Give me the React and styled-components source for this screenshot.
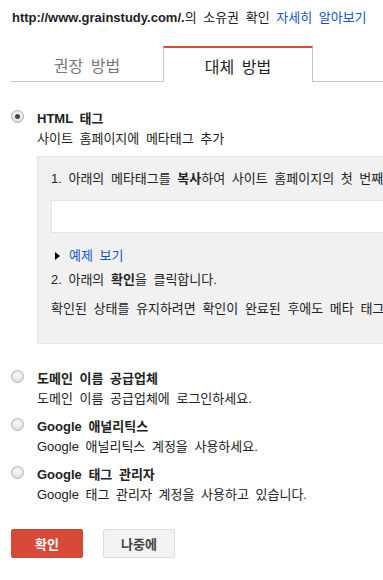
import React, { useState } from 'react';
import styled, { createGlobalStyle } from 'styled-components';

const GlobalStyle = createGlobalStyle`
  body {
    margin: 0;
    background: #fff;
    font-family: "Liberation Sans", Arial, "Noto Sans CJK KR", sans-serif;
    font-size: 13px;
    word-spacing: 3px;
    color: #222;
  }
`;

const Page = styled.div`
  width: 383px;
  height: 580px;
  overflow: hidden;
  padding: 8px 0 0 11px;
  box-sizing: border-box;
`;

const Header = styled.div`
  line-height: 20px;
  padding-left: 1px;
  white-space: nowrap;
`;

const Url = styled.b`
  font-weight: bold;
  color: #222;
`;

const Link = styled.a`
  color: #1155cc;
  text-decoration: none;
  cursor: pointer;
`;

const TabBar = styled.div`
  display: flex;
  margin-top: 18px;
  height: 35px;
  border-bottom: 1px solid #c6c6c6;
`;

const Tab = styled.div`
  width: ${(p) => p.$w}px;
  box-sizing: border-box;
  display: flex;
  align-items: center;
  justify-content: center;
  font-size: 16px;
  cursor: pointer;
  color: ${(p) => (p.$active ? '#222' : '#777')};
  border-top: 2px solid ${(p) => (p.$active ? '#dd4b39' : 'transparent')};
  border-left: 1px solid ${(p) => (p.$active ? '#c6c6c6' : 'transparent')};
  border-right: 1px solid ${(p) => (p.$active ? '#c6c6c6' : 'transparent')};
  background: #fff;
  margin-bottom: ${(p) => (p.$active ? '-1px' : '0')};
  padding-top: ${(p) => (p.$active ? '1px' : '0')};
`;

const Options = styled.div`
  margin-top: 27px;
  display: flex;
  flex-direction: column;
`;

const Option = styled.div`
  display: grid;
  grid-template-columns: 26px 1fr;
  margin-top: ${(p) => p.$gap || 0}px;
  line-height: 20px;
`;

const Radio = styled.span`
  width: 13px;
  height: 13px;
  margin-top: 1px;
  box-sizing: border-box;
  border-radius: 50%;
  border: 1px solid #b0b0b0;
  background: radial-gradient(circle at 50% 35%, #fafafa 0%, #d6d6d6 100%);
  display: flex;
  align-items: center;
  justify-content: center;
  &::after {
    content: '';
    width: 5px;
    height: 5px;
    border-radius: 50%;
    background: ${(p) => (p.$checked ? '#444' : 'transparent')};
  }
`;

const Title = styled.div`
  font-weight: bold;
  white-space: nowrap;
`;

const Sub = styled.div`
  white-space: nowrap;
`;

const Box = styled.div`
  margin-top: 7px;
  width: 420px;
  background: #f1f1f1;
  border: 1px solid #e5e5e5;
  padding: 12px 0 24px 13px;
  line-height: 20px;
  white-space: nowrap;
`;

const MetaInput = styled.div`
  margin-top: 11px;
  height: 33px;
  box-sizing: border-box;
  background: #fff;
  border: 1px solid #e3e3e3;
`;

const Toggle = styled.div`
  margin-top: 13px;
  display: flex;
  align-items: center;
  gap: 9px;
  padding-left: 4px;
  cursor: pointer;
`;

const Arrow = styled.span`
  width: 0;
  height: 0;
  border-top: 4px solid transparent;
  border-bottom: 4px solid transparent;
  border-left: 5px solid #000;
`;

const Step = styled.div`
  margin-top: ${(p) => p.$gap}px;
`;

const Buttons = styled.div`
  display: flex;
  gap: 20px;
  margin-top: 24px;
`;

const Button = styled.button`
  width: 72px;
  height: 29px;
  border-radius: 2px;
  font-family: inherit;
  font-size: 13px;
  font-weight: bold;
  cursor: pointer;
  border: 1px solid ${(p) => (p.$primary ? '#d14836' : '#dcdcdc')};
  background: ${(p) => (p.$primary ? '#d84a38' : '#f3f3f3')};
  color: ${(p) => (p.$primary ? '#fff' : '#444')};
`;

const App = () => {
  const [tab, setTab] = useState(1);

  return (
    <Page>
      <GlobalStyle />
      <Header>
        <Url>http://www.grainstudy.com/.</Url>의 소유권 확인 <Link>자세히 알아보기</Link>
      </Header>
      <TabBar>
        <Tab $w={152} $active={tab === 0} onClick={() => setTab(0)}>
          권장 방법
        </Tab>
        <Tab $w={150} $active={tab === 1} onClick={() => setTab(1)}>
          대체 방법
        </Tab>
      </TabBar>
      <Options>
        <Option>
          <Radio $checked />
          <div>
            <Title>HTML 태그</Title>
            <Sub>사이트 홈페이지에 메타태그 추가</Sub>
            <Box>
              <div>1. 아래의 메타태그를 <b>복사</b>하여 사이트 홈페이지의 첫 번째 섹션에 붙여넣으세요.</div>
              <MetaInput />
              <Toggle>
                <Arrow />
                <Link>예제 보기</Link>
              </Toggle>
              <Step $gap={4}>
                2. 아래의 <b>확인</b>을 클릭합니다.
              </Step>
              <Step $gap={9}>확인된 상태를 유지하려면 확인이 완료된 후에도 메타 태그를 삭제하지 마세요.</Step>
            </Box>
          </div>
        </Option>
        <Option $gap={25}>
          <Radio />
          <div>
            <Title>도메인 이름 공급업체</Title>
            <Sub>도메인 이름 공급업체에 로그인하세요.</Sub>
          </div>
        </Option>
        <Option $gap={8}>
          <Radio />
          <div>
            <Title>Google 애널리틱스</Title>
            <Sub>Google 애널리틱스 계정을 사용하세요.</Sub>
          </div>
        </Option>
        <Option $gap={8}>
          <Radio />
          <div>
            <Title>Google 태그 관리자</Title>
            <Sub>Google 태그 관리자 계정을 사용하고 있습니다.</Sub>
          </div>
        </Option>
      </Options>
      <Buttons>
        <Button $primary>확인</Button>
        <Button>나중에</Button>
      </Buttons>
    </Page>
  );
};

export default App;
